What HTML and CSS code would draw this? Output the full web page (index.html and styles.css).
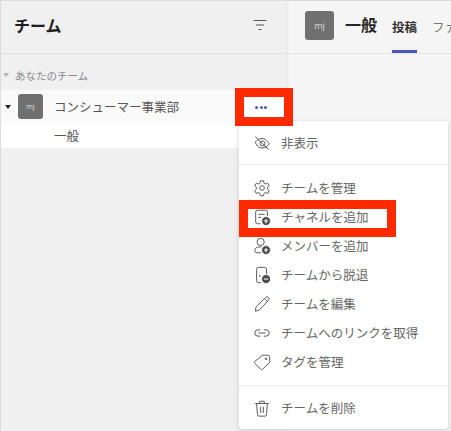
FILE: index.html
```html
<!DOCTYPE html>
<html lang="ja">
<head>
<meta charset="utf-8">
<title>チーム</title>
<link rel="stylesheet" href="styles.css">
</head>
<body>
<div class="app">
  <aside class="sidebar">
    <header class="side-head">
      <h1 class="side-title">チーム</h1>
      <svg class="filter" viewBox="0 0 16 12" width="16" height="12" fill="none" stroke="#555" stroke-width="1.1"><path d="M1.5 1.5h13M4 6h8M6.5 10.5h3"/></svg>
    </header>
    <div class="section"><span class="tri tri-grey"></span><span>あなたのチーム</span></div>
    <div class="team-row">
      <span class="tri tri-black"></span>
      <span class="avatar">mj</span>
      <span class="team-name">コンシューマー事業部</span>
    </div>
    <div class="channel-row">一般</div>
  </aside>
  <main class="main">
    <header class="main-head">
      <span class="avatar avatar-lg">mj</span>
      <span class="chan-title">一般</span>
      <span class="tab tab-active">投稿</span>
      <span class="tab">ファイル</span>
    </header>
  </main>

  <div class="menu">
    <div class="group">
      <div class="item"><svg class="ico" viewBox="0 0 20 20"><path d="M2.500 9c2-2.500 4.800-4 7.500-4s5.500 1.500 8 6c-2 3-4.800 4.500-8 4.500S4.500 14 2.500 9z"/><circle cx="10.500" cy="10.500" r="2.800"/><path d="M2.500 3l15 14.500"/></svg>非表示</div>
    </div>
    <div class="group group-mid">
      <div class="item"><svg class="ico" viewBox="0 0 20 20"><path d="M8.300 2h3.400l.5 2.500 1.700 1 2.500-.8 1.700 2.900-1.900 1.700v2l1.900 1.700-1.700 2.900-2.500-.8-1.700 1-.5 2.500H8.300l-.5-2.500-1.700-1-2.500.8-1.700-2.900 1.900-1.700v-2L1.900 7.600l1.700-2.900 2.500.8 1.700-1z"/><circle cx="10" cy="10" r="2.600"/></svg>チームを管理</div>
      <div class="item"><svg class="ico" viewBox="0 0 20 20"><path d="M8.500 17.500H5a2 2 0 0 1-2-2V4.500a2 2 0 0 1 2-2h9a2 2 0 0 1 2 2V9"/><path d="M6 7h7M6 10.500h3"/><circle class="solid" cx="14.500" cy="14.500" r="5"/><path class="plus" d="M14.500 12.100v4.800M12.100 14.500h4.800"/></svg>チャネルを追加</div>
      <div class="item"><svg class="ico" viewBox="0 0 20 20"><circle cx="8.500" cy="5.500" r="4"/><path d="M9 17.500H4.500A2.500 2.500 0 0 1 2 15c0-2.500 2-4 5.500-4h2"/><circle class="solid" cx="14.500" cy="14.500" r="5"/><path class="plus" d="M14.500 12.100v4.800M12.100 14.500h4.800"/></svg>メンバーを追加</div>
      <div class="item"><svg class="ico" viewBox="0 0 20 20"><path d="M9 18.500H6a2 2 0 0 1-2-2v-13a2 2 0 0 1 2-2h7a2 2 0 0 1 2 2V9"/><circle cx="7.500" cy="11" r=".6"/><circle class="solid" cx="14.500" cy="14.500" r="5"/><path class="plus" d="M12.100 14.500h4.800"/></svg>チームから脱退</div>
      <div class="item"><svg class="ico" viewBox="0 0 20 20"><path d="M2.500 18l1-5L14 2.700a2.100 2.100 0 0 1 3.200 3.100L7 16.800z"/><path d="M12.800 4l3.100 3.100"/></svg>チームを編集</div>
      <div class="item"><svg class="ico" viewBox="0 0 20 20"><path d="M8 6.500H5.500a3.500 3.500 0 0 0 0 7H8M12 6.500h2.500a3.500 3.500 0 0 1 0 7H12M6 10h8"/></svg>チームへのリンクを取得</div>
      <div class="item"><svg class="ico" viewBox="0 0 20 20"><path d="M10.500 2.500H17a1.500 1.500 0 0 1 1.500 1.500v6.500l-7.800 7.500a1.500 1.500 0 0 1-2.100 0L2 11.500a1.500 1.500 0 0 1 0-2.100z"/><circle cx="14.500" cy="6.500" r="1"/></svg>タグを管理</div>
    </div>
    <div class="group">
      <div class="item"><svg class="ico" viewBox="0 0 20 20"><path d="M2.500 5h15M7.500 5V2.500h5V5M4 5l1 12.500A1.500 1.500 0 0 0 6.500 19h7a1.500 1.500 0 0 0 1.500-1.500L16 5M8.500 8.500v7M11.500 8.500v7"/></svg>チームを削除</div>
    </div>
  </div>

  <div class="dots-btn"><span class="dot"></span><span class="dot"></span><span class="dot"></span></div>
  <div class="callout"></div>
</div>
</body>
</html>
```

FILE: styles.css
```css
* { box-sizing: border-box; margin: 0; padding: 0; }
html, body { width: 451px; height: 431px; overflow: hidden; background: #f5f5f5; }
body { font-family: "Noto Sans CJK JP", "Noto Sans", sans-serif; color: #424242; }

.app {
  position: relative;
  display: flex;
  width: 451px;
  height: 431px;
  overflow: hidden;
  border-top: 1px solid #dcdcdc;
  border-left: 1px solid #dcdcdc;
}

.sidebar {
  width: 285px;
  flex: none;
  background: #f0f0f0;
  box-shadow: 1px 0 3px rgba(0, 0, 0, .08);
}
.side-head {
  height: 53px;
  display: flex;
  align-items: center;
  justify-content: space-between;
  padding: 0 18px 4px 13px;
  border-bottom: 1px solid #e0e0e0;
}
.side-title { font-size: 16px; font-weight: 700; color: #1f1f1f; }

.section {
  height: 36px;
  padding: 6px 0 0 2px;
  display: flex;
  align-items: center;
  gap: 6px;
  font-size: 10.5px;
  color: #8a8a8a;
}
.tri { width: 0; height: 0; border-left: 3px solid transparent; border-right: 3px solid transparent; border-top: 4px solid; flex: none; }
.tri-grey { border-top-color: #b5b5b5; }
.tri-black { border-top-color: #222; }

.team-row {
  height: 33px;
  display: flex;
  align-items: center;
  padding-left: 4px;
  background: #fafafa;
  font-size: 12.500px;
}
.avatar {
  width: 25px;
  height: 25px;
  margin-left: 7px;
  flex: none;
  display: flex;
  align-items: center;
  justify-content: center;
  background: #707070;
  border-radius: 3px;
  color: #d8d8d8;
  font-size: 7px;
  font-family: "Noto Sans", sans-serif;
}
.team-name { margin-left: 11px; color: #555; }
.channel-row {
  height: 25px;
  padding-left: 53px;
  display: flex;
  align-items: center;
  background: #fff;
  font-size: 12.500px;
  color: #555;
}

.main { flex: 1; min-width: 0; }
.main-head {
  height: 53px;
  display: flex;
  align-items: flex-start;
  padding-left: 19px;
  border-bottom: 1px solid #e6e6e6;
  white-space: nowrap;
  overflow: hidden;
}
.avatar-lg { width: 29px; height: 29px; margin: 10px 0 0; font-size: 9px; }
.chan-title { margin: 11px 0 0 11px; font-size: 16px; font-weight: 700; color: #242424; line-height: 24px; }
.tab { margin: 16px 0 0 15px; font-size: 12.500px; line-height: 20px; color: #777; height: 36px; }
.tab-active { font-weight: 700; color: #333; border-bottom: 3px solid #4b53bc; }

.menu {
  position: absolute;
  left: 238px;
  top: 120px;
  width: 209px;
  height: 309px;
  background: #fff;
  border-radius: 4px;
  border-bottom: 1px solid #e0e0e0;
  box-shadow: 0 1px 5px rgba(0, 0, 0, .16);
  font-size: 12.500px;
  color: #666;
}
.group { padding: 7px 0; border-bottom: 1px solid #ececec; }
.group:last-child { border-bottom: 0; padding: 7px 0 0; }
.group-mid { padding: 8px 0 9px; }
.item { height: 29px; display: flex; align-items: center; padding-left: 14px; gap: 10px; white-space: nowrap; }
.ico { width: 18px; height: 18px; flex: none; fill: none; stroke: #5a5a5a; stroke-width: 1.100; }
.ico .solid { fill: #4a4a4a; stroke: #fff; stroke-width: 1; }
.ico .plus { stroke: #fff; stroke-width: 1.200; }

.dots-btn {
  position: absolute;
  left: 234px;
  top: 87px;
  width: 58px;
  height: 38px;
  border: 9px solid #ff2a00;
  padding-right: 6px;
  background: #fff;
  display: flex;
  align-items: center;
  justify-content: center;
  gap: 1.500px;
}
.dot { width: 3px; height: 3px; border-radius: 50%; background: #4b53bc; }
.callout {
  position: absolute;
  left: 238px;
  top: 199px;
  width: 157px;
  height: 37px;
  border: 9px solid #ff2a00;
}
```
